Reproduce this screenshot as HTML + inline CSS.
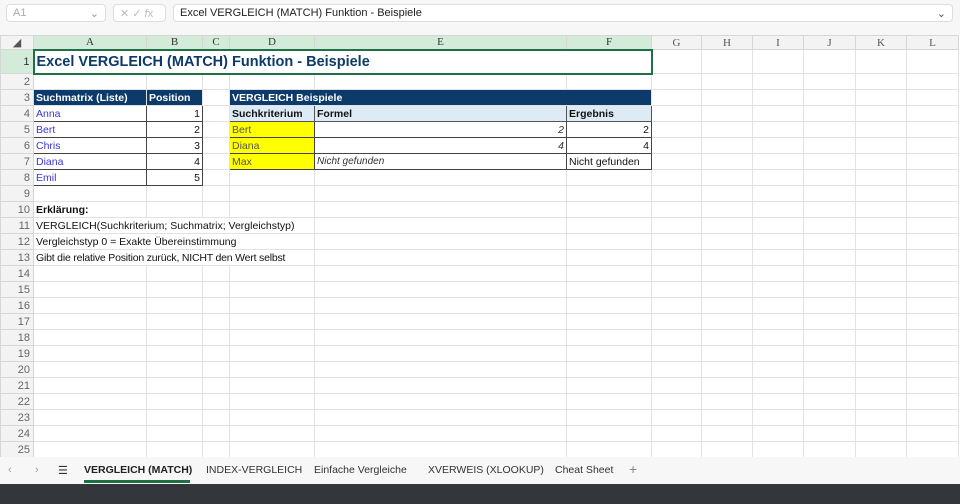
<!DOCTYPE html><html><head><style>
*{margin:0;padding:0;box-sizing:border-box}
body{width:960px;height:504px;overflow:hidden;background:#fff;font-family:"Liberation Sans",sans-serif;position:relative}
.top{position:absolute;left:0;top:0;width:960px;height:35px;background:#f7f7f7}
.box{position:absolute;top:4px;height:18px;border:1px solid #ddd;border-radius:4px;background:#fff;font-size:11px;color:#222;padding:2px 6px}
table{position:absolute;left:0;top:35px;border-collapse:collapse;table-layout:fixed;width:958px;font-size:10.5px}
td{border:1px solid #e2e2e2;height:16px;padding:0 2px;white-space:nowrap;overflow:hidden;color:#111}
tr.h td{height:13px;background:#f3f3f3;color:#555;text-align:center;font-family:"Liberation Serif",serif;font-size:11px;border-color:#d6d6d6}
tr.h td.s{background:#d3ecd9;color:#333}
td.rn{background:#f3f3f3;color:#666;text-align:right;font-size:11px;padding-right:3px;border-color:#d6d6d6}
td.rs{background:#d3ecd9;color:#333}
.hd{background:#0c3b6b;color:#fff;font-weight:bold}
.lb{background:#ddebf7;font-weight:bold;border:1px solid #555}
.bx{border:1px solid #444}
.bl{color:#3a35d6}
.y{background:#ffff00;border:1px solid #444;color:#555}
.r{text-align:right}
.i{font-style:italic;color:#333}
.tabs{position:absolute;left:0;top:457px;width:960px;height:27px;background:#f7f7f7;font-size:11px;color:#333}
.tabs span{position:absolute;top:7px}
.dark{position:absolute;left:0;top:484px;width:960px;height:20px;background:#33373c}
</style></head><body>
<div class="top">
<div class="box" style="left:6px;width:100px;color:#aaa">A1<span style="float:right;color:#999">⌄</span></div>
<div class="box" style="left:113px;width:53px;color:#bbb">✕ ✓ <i>f</i>x</div>
<div class="box" style="left:173px;width:780px">Excel VERGLEICH (MATCH) Funktion - Beispiele<span style="float:right;color:#555">⌄</span></div>
</div>
<table>
<colgroup><col style="width:33px"><col style="width:113px"><col style="width:56px"><col style="width:27px"><col style="width:85px"><col style="width:252px"><col style="width:85px"><col style="width:50px"><col style="width:51px"><col style="width:51px"><col style="width:52px"><col style="width:51px"><col style="width:52px"></colgroup>
<tr class="h"><td>◢</td><td class="s">A</td><td class="s">B</td><td class="s">C</td><td class="s">D</td><td class="s">E</td><td class="s">F</td><td>G</td><td>H</td><td>I</td><td>J</td><td>K</td><td>L</td></tr>
<tr><td class="rn rs" style="height:24px">1</td><td colspan="6" style="border:2px solid #1e7145;font-size:14.5px;font-weight:bold;color:#0c3b6b">Excel VERGLEICH (MATCH) Funktion - Beispiele</td><td></td><td></td><td></td><td></td><td></td><td></td></tr>
<tr><td class="rn">2</td><td></td><td></td><td></td><td></td><td></td><td></td><td></td><td></td><td></td><td></td><td></td><td></td></tr>
<tr><td class="rn">3</td><td class="hd">Suchmatrix (Liste)</td><td class="hd">Position</td><td></td><td class="hd" colspan="3">VERGLEICH Beispiele</td><td></td><td></td><td></td><td></td><td></td><td></td></tr>
<tr><td class="rn">4</td><td class="bx bl">Anna</td><td class="bx r">1</td><td></td><td class="lb">Suchkriterium</td><td class="lb">Formel</td><td class="lb">Ergebnis</td><td></td><td></td><td></td><td></td><td></td><td></td></tr>
<tr><td class="rn">5</td><td class="bx bl">Bert</td><td class="bx r">2</td><td></td><td class="y">Bert</td><td class="bx r i">2</td><td class="bx r">2</td><td></td><td></td><td></td><td></td><td></td><td></td></tr>
<tr><td class="rn">6</td><td class="bx bl">Chris</td><td class="bx r">3</td><td></td><td class="y">Diana</td><td class="bx r i">4</td><td class="bx r">4</td><td></td><td></td><td></td><td></td><td></td><td></td></tr>
<tr><td class="rn">7</td><td class="bx bl">Diana</td><td class="bx r">4</td><td></td><td class="y">Max</td><td class="bx i" style="font-size:10px">Nicht gefunden</td><td class="bx">Nicht gefunden</td><td></td><td></td><td></td><td></td><td></td><td></td></tr>
<tr><td class="rn">8</td><td class="bx bl">Emil</td><td class="bx r">5</td><td></td><td></td><td></td><td></td><td></td><td></td><td></td><td></td><td></td><td></td></tr>
<tr><td class="rn">9</td><td></td><td></td><td></td><td></td><td></td><td></td><td></td><td></td><td></td><td></td><td></td><td></td></tr>
<tr><td class="rn">10</td><td style="font-weight:bold">Erklärung:</td><td></td><td></td><td></td><td></td><td></td><td></td><td></td><td></td><td></td><td></td><td></td></tr>
<tr><td class="rn">11</td><td colspan="4">VERGLEICH(Suchkriterium; Suchmatrix; Vergleichstyp)</td><td></td><td></td><td></td><td></td><td></td><td></td><td></td><td></td></tr>
<tr><td class="rn">12</td><td colspan="4">Vergleichstyp 0 = Exakte Übereinstimmung</td><td></td><td></td><td></td><td></td><td></td><td></td><td></td><td></td></tr>
<tr><td class="rn">13</td><td colspan="4" style="letter-spacing:-0.2px">Gibt die relative Position zurück, NICHT den Wert selbst</td><td></td><td></td><td></td><td></td><td></td><td></td><td></td><td></td></tr>
<tr><td class="rn">14</td><td></td><td></td><td></td><td></td><td></td><td></td><td></td><td></td><td></td><td></td><td></td><td></td></tr>
<tr><td class="rn">15</td><td></td><td></td><td></td><td></td><td></td><td></td><td></td><td></td><td></td><td></td><td></td><td></td></tr>
<tr><td class="rn">16</td><td></td><td></td><td></td><td></td><td></td><td></td><td></td><td></td><td></td><td></td><td></td><td></td></tr>
<tr><td class="rn">17</td><td></td><td></td><td></td><td></td><td></td><td></td><td></td><td></td><td></td><td></td><td></td><td></td></tr>
<tr><td class="rn">18</td><td></td><td></td><td></td><td></td><td></td><td></td><td></td><td></td><td></td><td></td><td></td><td></td></tr>
<tr><td class="rn">19</td><td></td><td></td><td></td><td></td><td></td><td></td><td></td><td></td><td></td><td></td><td></td><td></td></tr>
<tr><td class="rn">20</td><td></td><td></td><td></td><td></td><td></td><td></td><td></td><td></td><td></td><td></td><td></td><td></td></tr>
<tr><td class="rn">21</td><td></td><td></td><td></td><td></td><td></td><td></td><td></td><td></td><td></td><td></td><td></td><td></td></tr>
<tr><td class="rn">22</td><td></td><td></td><td></td><td></td><td></td><td></td><td></td><td></td><td></td><td></td><td></td><td></td></tr>
<tr><td class="rn">23</td><td></td><td></td><td></td><td></td><td></td><td></td><td></td><td></td><td></td><td></td><td></td><td></td></tr>
<tr><td class="rn">24</td><td></td><td></td><td></td><td></td><td></td><td></td><td></td><td></td><td></td><td></td><td></td><td></td></tr>
<tr><td class="rn">25</td><td></td><td></td><td></td><td></td><td></td><td></td><td></td><td></td><td></td><td></td><td></td><td></td></tr>
</table>
<div class="tabs">
<span style="left:8px;color:#999">‹</span><span style="left:35px;color:#999">›</span><span style="left:58px">☰</span>
<span style="left:84px;font-weight:bold;color:#222;font-size:10.5px">VERGLEICH (MATCH)</span>
<div style="position:absolute;left:84px;top:23px;width:106px;height:3px;background:#1e7145"></div>
<span style="left:206px;font-size:10.5px">INDEX-VERGLEICH</span><span style="left:314px;font-size:10.5px">Einfache Vergleiche</span><span style="left:428px;font-size:10.5px">XVERWEIS (XLOOKUP)</span><span style="left:555px;font-size:10.5px">Cheat Sheet</span><span style="left:629px;color:#888;font-size:14px;top:4px">+</span>
</div>
<div class="dark"></div>
</body></html>
